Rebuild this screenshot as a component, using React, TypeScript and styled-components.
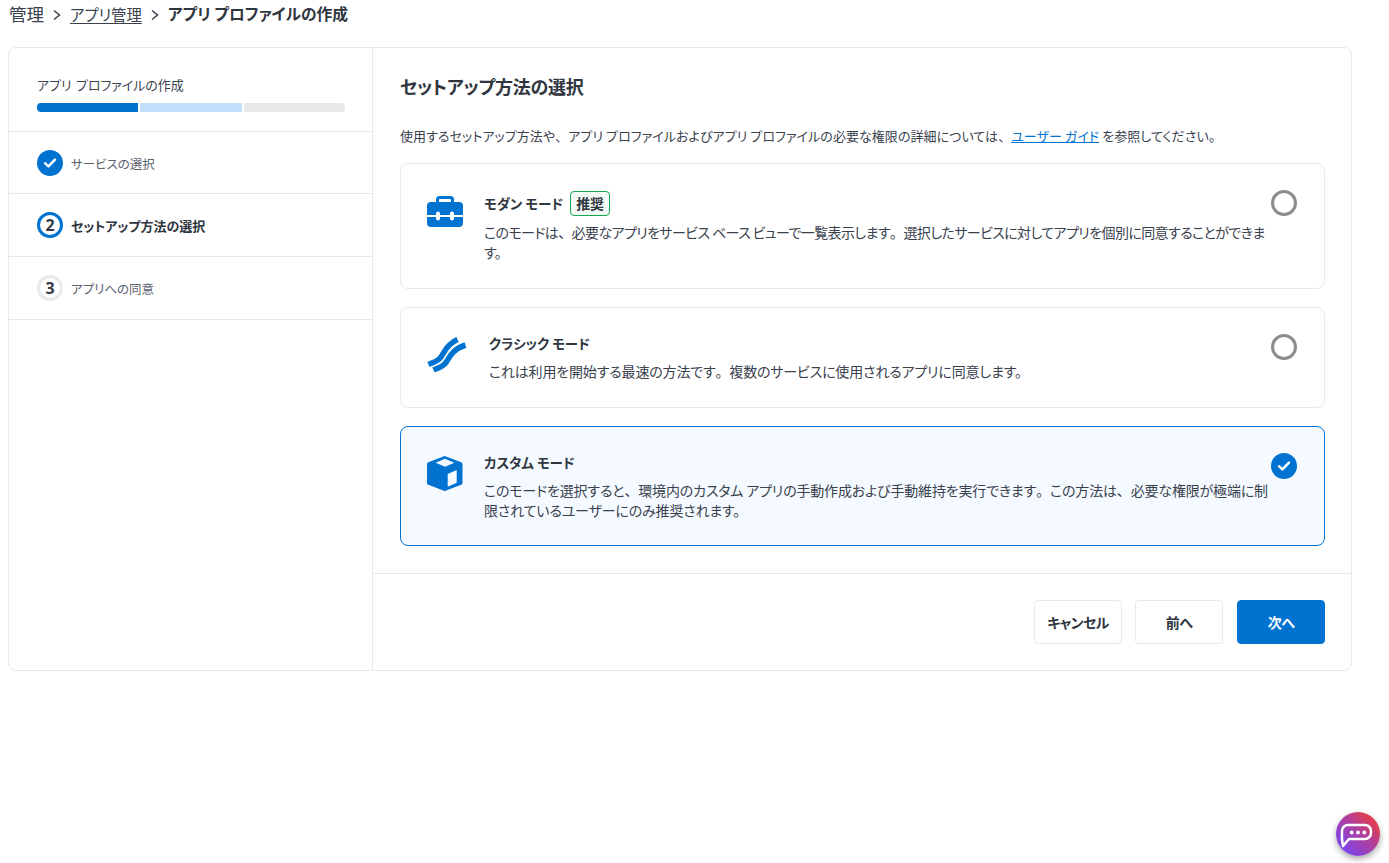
import React from "react";
import styled, { createGlobalStyle } from "styled-components";

const Global = createGlobalStyle`
  html, body { margin: 0; padding: 0; background: #fff; }
  body { font-family: "Noto Sans CJK JP", "Noto Sans", sans-serif; color: #2f3640; font-feature-settings: "palt"; }
  * { box-sizing: border-box; }
`;
const Page = styled.div`
  width: 1389px; height: 863px; padding: 0 37px 0 8px; overflow: hidden;
`;
const Crumbs = styled.nav`
  height: 47px; padding: 0 0 20px 1px; display: flex; align-items: center; line-height: 28px; color: #39414d;
`;
const CrumbRoot = styled.span`
  font-size: 17.5px;
`;
const CrumbLink = styled.a`
  font-size: 15.4px; color: #39414d; text-decoration: underline; text-underline-offset: 2px;
`;
const CrumbCurrent = styled.span`
  font-size: 15.75px; font-weight: 700; color: #2f3640;
`;
const Sep = styled.svg`
  width: 10px; height: 12px; margin: 2px 8px 0 8px; flex: none;
`;
const Card = styled.div`
  width: 1344px; height: 624px; display: flex; border: 1px solid #e8e9eb; border-radius: 8px; background: #fff;
`;
const Side = styled.aside`
  width: 364px; flex: none; border-right: 1px solid #e8e9eb;
`;
const SideHead = styled.div`
  height: 84px; padding: 26px 27px 0 28px; border-bottom: 1px solid #e8e9eb;
`;
const SideTitle = styled.div`
  font-size: 13px; line-height: 22px; color: #3b434f; word-spacing: 1.5px; letter-spacing: -0.05px;
`;
const Progress = styled.div`
  display: flex; gap: 2px; margin-top: 7px; height: 9px; border-radius: 4px; overflow: hidden;
`;
const Segment = styled.div<{ $c: string }>`
  flex: 1; background: ${p => p.$c};
`;
const StepRow = styled.div<{ $h: number }>`
  height: ${p => p.$h}px; display: flex; align-items: center; gap: 8px; padding-left: 28px; border-bottom: 1px solid #e8e9eb;
`;
const Circle = styled.div<{ $c: string }>`
  width: 26px; height: 26px; border-radius: 50%; border: 3px solid ${p => p.$c}; display: flex; align-items: center; justify-content: center;
  font: 700 16px/1 "Noto Sans", "Noto Sans CJK JP", sans-serif; color: #343b46; flex: none;
`;
const Filled = styled.div`
  width: 26px; height: 26px; border-radius: 50%; background: #0073d1; display: flex; align-items: center; justify-content: center; flex: none;
`;
const StepLabel = styled.span<{ $b?: boolean }>`
  margin-top: 2px; font-size: ${p => (p.$b ? 13 : 12.5)}px; line-height: 20px; font-weight: ${p => (p.$b ? 700 : 400)}; color: ${p => (p.$b ? "#2f3640" : "#5a626d")};
`;
const Main = styled.main`
  flex: 1; display: flex; flex-direction: column; min-width: 0;
`;
const Content = styled.div`
  height: 526px; padding: 23px 26px 0 27px; border-bottom: 1px solid #e8e9eb;
`;
const Title = styled.h2`
  margin: 0; font-size: 18px; line-height: 30px; font-weight: 700; color: #2f3640; letter-spacing: -0.2px;
`;
const Intro = styled.p`
  margin: 24px 0 16px; font-size: 13px; line-height: 22px; color: #39414d; white-space: nowrap; letter-spacing: 0.05px;
`;
const Punct = styled.span`
  font-feature-settings: normal;
`;
const Link = styled.a`
  color: #0073d1; text-decoration: underline;
`;
const Options = styled.div`
  display: flex; flex-direction: column; gap: 18px;
`;
const Option = styled.div<{ $h: number; $sel?: boolean; $pad: number; $gap: number }>`
  position: relative; height: ${p => p.$h}px; display: flex; gap: ${p => p.$gap}px; padding: ${p => p.$pad}px 50px 0 26px;
  border: 1px solid ${p => (p.$sel ? "#0073d1" : "#e8e9eb")}; border-radius: 8px; background: ${p => (p.$sel ? "#f4faff" : "#fff")};
`;
const IconBox = styled.div<{ $top: number; $w: number }>`
  width: ${p => p.$w}px; margin-top: ${p => p.$top}px; flex: none;
`;
const OptBody = styled.div`
  flex: 1; min-width: 0;
`;
const OptTitle = styled.div`
  display: flex; align-items: center; gap: 7px; font-size: 13.5px; line-height: 26px; font-weight: 700; color: #2f3640;
`;
const Badge = styled.span`
  width: 40px; height: 25px; display: flex; align-items: center; justify-content: center; border: 1px solid #12a950; border-radius: 4px; background: #f4fbf6; font-size: 14px; font-weight: 700; color: #2f3640;
`;
const OptText = styled.p<{ $mt: number; $ls: number }>`
  margin: ${p => p.$mt}px 0 0; font-size: 14px; line-height: 20px; color: #39414d; letter-spacing: ${p => p.$ls}px; white-space: nowrap;
`;
const Radio = styled.div<{ $top: number }>`
  position: absolute; top: ${p => p.$top}px; right: 27px; width: 26px; height: 26px; border-radius: 50%; border: 3px solid #8b8b8b; background: #fff;
`;
const RadioOn = styled(Filled)<{ $top: number }>`
  position: absolute; top: ${p => p.$top}px; right: 27px;
`;
const Footer = styled.div`
  flex: 1; display: flex; justify-content: flex-end; gap: 13px; padding: 26px 26px 0 0;
`;
const Btn = styled.button<{ $primary?: boolean }>`
  width: 88px; height: 44px; padding: 0; border-radius: 4px; font: 700 14px/20px "Noto Sans CJK JP", sans-serif; font-feature-settings: "palt"; letter-spacing: -0.6px;
  margin-left: ${p => (p.$primary ? 1 : 0)}px;
  border: 1px solid ${p => (p.$primary ? "#0073d1" : "#e8e9eb")}; background: ${p => (p.$primary ? "#0073d1" : "#fff")}; color: ${p => (p.$primary ? "#fff" : "#2f3640")};
`;
const Chat = styled.div`
  position: fixed; left: 1336px; top: 812px; width: 44px; height: 44px; border-radius: 50%;
  background: linear-gradient(45deg, #7d44ea 15%, #b03f9e 55%, #ee3b3b 90%); box-shadow: 0 3px 6px rgba(0,0,0,.35);
`;

const Check = () => (
  <svg width="14" height="12" viewBox="0 0 14 12"><path d="M2 6.2 5.4 9.4 12 2.6" fill="none" stroke="#fff" strokeWidth="2.4" strokeLinecap="round" strokeLinejoin="round" /></svg>
);
const Chevron = () => (
  <Sep viewBox="0 0 10 12"><path d="M2 1.5 7.5 6 2 10.5" fill="none" stroke="#39414d" strokeWidth="1.5" /></Sep>
);

export default function App() {
  return (
    <Page>
      <Global />
      <Crumbs>
        <CrumbRoot>管理</CrumbRoot><Chevron />
        <CrumbLink>アプリ管理</CrumbLink><Chevron />
        <CrumbCurrent>アプリ プロファイルの作成</CrumbCurrent>
      </Crumbs>
      <Card>
        <Side>
          <SideHead>
            <SideTitle>アプリ プロファイルの作成</SideTitle>
            <Progress>
              <Segment $c="#0073d1" /><Segment $c="#c0e0fc" /><Segment $c="#e8e9eb" />
            </Progress>
          </SideHead>
          <StepRow $h={62}><Filled><Check /></Filled><StepLabel>サービスの選択</StepLabel></StepRow>
          <StepRow $h={63}><Circle $c="#0073d1">2</Circle><StepLabel $b>セットアップ方法の選択</StepLabel></StepRow>
          <StepRow $h={63}><Circle $c="#e8e9eb">3</Circle><StepLabel>アプリへの同意</StepLabel></StepRow>
        </Side>
        <Main>
          <Content>
            <Title>セットアップ方法の選択</Title>
            <Intro>使用するセットアップ方法や<Punct>、</Punct>アプリ プロファイルおよびアプリ プロファイルの必要な権限の詳細については<Punct>、</Punct><Link>ユーザー ガイド</Link> を参照してください。</Intro>
            <Options>
              <Option $h={126} $pad={26} $gap={21}>
                <IconBox $top={6} $w={36}>
                  <svg width="36" height="31" viewBox="0 0 36 31" fill="#0073d1" style={{ display: "block" }}>
                    <path d="M9 8V3.5A3.5 3.5 0 0 1 12.5 0h11A3.5 3.5 0 0 1 27 3.5V8h-3V4a1 1 0 0 0-1-1H13a1 1 0 0 0-1 1v4z" />
                    <path d="M0 10a4 4 0 0 1 4-4h28a4 4 0 0 1 4 4v9h-9v-1.5a2 2 0 0 0-4 0V19H13v-1.5a2 2 0 0 0-4 0V19H0z" />
                    <path d="M0 21h9v1.5a2 2 0 0 0 4 0V21h10v1.5a2 2 0 0 0 4 0V21h9v6a4 4 0 0 1-4 4H4a4 4 0 0 1-4-4z" />
                  </svg>
                </IconBox>
                <OptBody>
                  <OptTitle>モダン モード<Badge>推奨</Badge></OptTitle>
                  <OptText $mt={6} $ls={-0.6}>このモードは<Punct>、</Punct>必要なアプリをサービス ベース ビューで一覧表示します<Punct>。</Punct>選択したサービスに対してアプリを個別に同意することができま<br />す。</OptText>
                </OptBody>
                <Radio $top={26} />
              </Option>
              <Option $h={101} $pad={22} $gap={22}>
                <IconBox $top={7} $w={40}>
                  <svg width="40" height="35" viewBox="0 0 40 35" fill="none" stroke="#0073d1" strokeWidth="5.6" style={{ display: "block" }}>
                    <path d="M1.5 27.5C7 25 11 24.5 14 20S20 7 30.5 2.5" />
                    <path d="M6.5 33C12 30.5 16 30 19 25.5S25 12.5 38.5 8" />
                  </svg>
                </IconBox>
                <OptBody>
                  <OptTitle>クラシック モード</OptTitle>
                  <OptText $mt={5} $ls={-0.17}>これは利用を開始する最速の方法です<Punct>。</Punct>複数のサービスに使用されるアプリに同意します。</OptText>
                </OptBody>
                <Radio $top={26} />
              </Option>
              <Option $h={120} $sel $pad={22} $gap={21}>
                <IconBox $top={7} $w={36}>
                  <svg width="36" height="35" viewBox="0 0 36 35" fill="#0073d1" stroke="#0073d1" style={{ display: "block" }}>
                    <path d="M17.7 2 33.5 8V27L17.7 33 2 27V8z" strokeWidth="4" strokeLinejoin="round" />
                    <path d="M18 2.7 27.3 6.7 18 10.7 8.7 6.7z" fill="#f4faff" stroke="none" />
                    <path d="M20.7 18 29.7 14V26.7L20.7 30.7z" fill="#f4faff" stroke="none" />
                  </svg>
                </IconBox>
                <OptBody>
                  <OptTitle>カスタム モード</OptTitle>
                  <OptText $mt={5} $ls={-0.17}>このモードを選択すると<Punct>、</Punct>環境内のカスタム アプリの手動作成および手動維持を実行できます<Punct>。</Punct>この方法は<Punct>、</Punct>必要な権限が極端に制<br />限されているユーザーにのみ推奨されます。</OptText>
                </OptBody>
                <RadioOn $top={26}><Check /></RadioOn>
              </Option>
            </Options>
          </Content>
          <Footer>
            <Btn>キャンセル</Btn>
            <Btn>前へ</Btn>
            <Btn $primary>次へ</Btn>
          </Footer>
        </Main>
      </Card>
      <Chat>
        <svg width="44" height="44" viewBox="0 0 44 44" fill="none">
          <path d="M6 27.5V19a6 6 0 0 1 6-6h17a6 6 0 0 1 6 6v2a6 6 0 0 1-6 6H13l-6 7z" stroke="#fff" strokeWidth="2.5" strokeLinejoin="round" />
          <circle cx="15.7" cy="20.5" r="1.9" fill="#fff" /><circle cx="22" cy="20.5" r="1.9" fill="#fff" /><circle cx="28.3" cy="20.5" r="1.9" fill="#fff" />
        </svg>
      </Chat>
    </Page>
  );
}
